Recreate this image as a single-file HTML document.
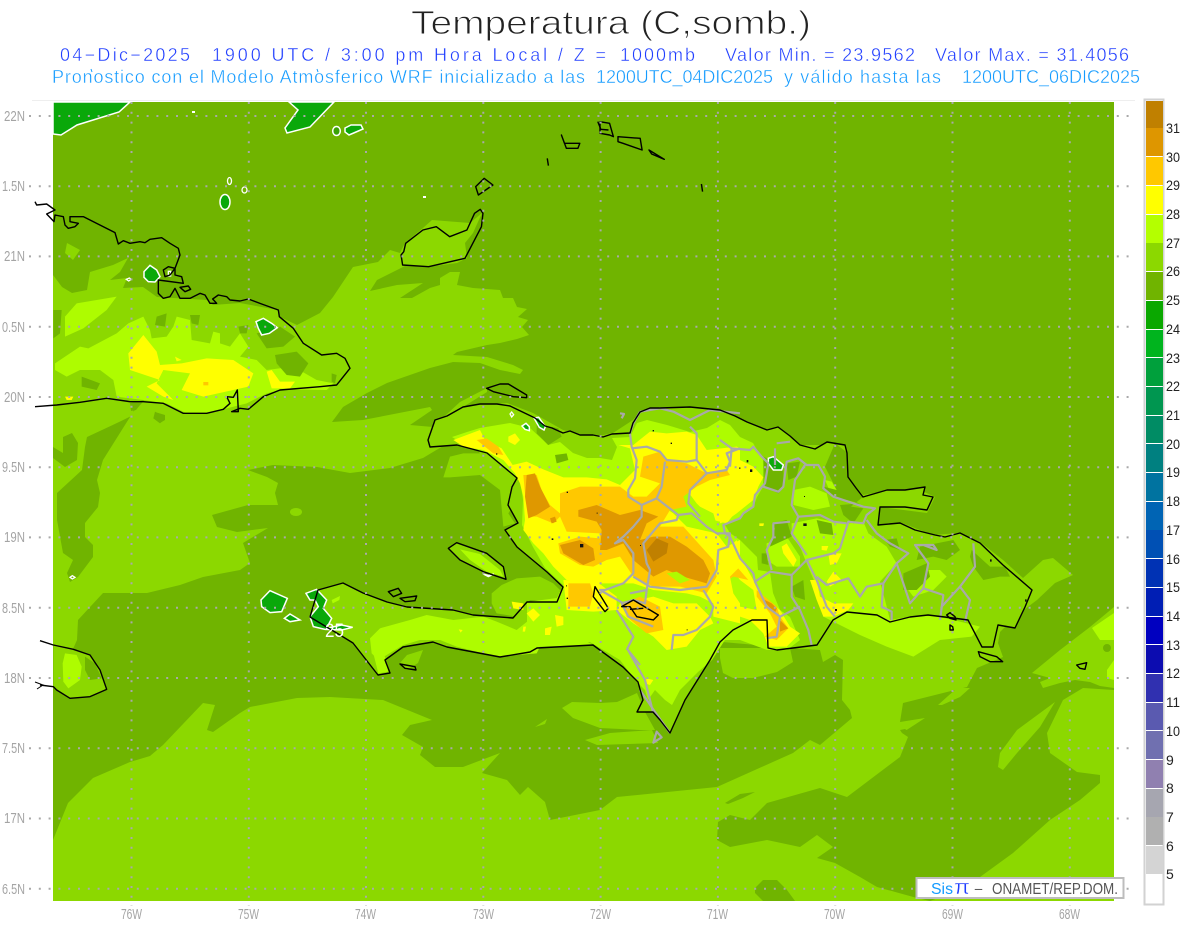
<!DOCTYPE html>
<html lang="es"><head><meta charset="utf-8"><title>Temperatura (C,somb.)</title>
<style>
html,body{margin:0;padding:0;background:#fff;width:1200px;height:927px;overflow:hidden}
svg{display:block}
text{font-family:"Liberation Sans",sans-serif}
.d{fill:#70b400}.a{fill:#8cd800}.b{fill:#aefc00}.y{fill:#ffff00}.o{fill:#ffc800}.p{fill:#df9800}.q{fill:#c08000}
.g{fill:#0aa80a;stroke:#fff;stroke-width:1.5;vector-effect:non-scaling-stroke}
.r{fill:none;stroke:#fff;stroke-width:1.3;vector-effect:non-scaling-stroke}
.c{fill:none;stroke:#000;stroke-width:1.4;vector-effect:non-scaling-stroke;stroke-linejoin:round}
.m{fill:none;stroke:#a9a9a9;stroke-width:2.2;vector-effect:non-scaling-stroke;stroke-linejoin:round}
.t1{fill:#222;stroke:#fff;stroke-width:.95}
.t2{fill:#1f3dff;stroke:#fff;stroke-width:.4}
.t3{fill:#149bff;stroke:#fff;stroke-width:.4}
.ax{fill:#a4a4a4;font-size:14.5px}
.lg{fill:#222;font-size:14px}
</style></head><body>
<svg width="1200" height="927" viewBox="0 0 1200 927" xmlns="http://www.w3.org/2000/svg">
<defs>
<clipPath id="mp"><rect x="53" y="102" width="1061" height="799"/></clipPath>
<path id="hisp" d="M428 440 435 420 447 416 463 407 480 404 497 404 510 406 535 418 545 426 552 428 563 433 570 431 580 435 593 435 603 437 612 434 630 433 633 423 640 412 650 408 660 408 690 407 720 410 735 416 747 422 767 430 778 427 790 436 800 445 815 449 827 442 845 445 847 453 848 477 856 488 863 497 887 490 905 490 925 487 923 495 933 497 927 510 905 507 880 507 878 525 900 523 915 530 935 535 945 537 960 533 980 543 1003 565 1032 590 1025 607 1015 628 998 625 993 647 982 647 968 620 953 618 928 615 910 617 890 622 877 615 847 612 833 620 817 645 777 650 768 648 767 620 752 620 733 630 720 642 710 660 685 700 670 733 660 720 653 712 637 712 643 700 638 682 623 667 593 645 537 648 530 652 500 657 447 647 433 642 403 647 385 660 390 673 378 675 353 643 340 635 310 617 318 590 343 583 363 593 387 602 407 607 453 610 473 615 513 618 527 602 557 602 563 587 547 572 517 547 505 530 518 523 508 505 512 487 517 478 487 453 457 445 430 447Z"/>
</defs>
<rect width="1200" height="927" fill="#fff"/>

<g clip-path="url(#mp)">
<rect x="53" y="102" width="1061" height="799" class="d"/>

<!-- big L1 region -->
<path class="a" d="M53 275 62 287 72 293 87 290 90 272 113 265 128 258 120 272 110 280 127 278 123 288 143 287 157 297 207 300 213 305 240 303 278 310 280 317 297 325 320 313 333 297 353 267 378 262 390 250 400 253 405 243 423 228 432 220 470 223 482 213 473 233 465 243 467 258 457 263 427 267 405 266 377 280 370 291 397 285 423 283 400 298 412 298 430 288 440 285 440 278 450 272 460 272 457 285 473 288 500 290 503 298 513 298 517 307 527 309 518 317 528 320 522 327 529 335 517 339 500 343 487 345 457 352 453 355 487 357 513 365 523 370 520 374 500 370 480 363 453 362 430 368 387 383 367 393 343 407 332 422 363 420 430 407 432 410 410 425 433 427 460 402 487 388 487 392 463 407 507 403 533 413 563 430 593 437 613 433 633 420 640 412 667 408 720 410 747 422 767 430 778 427 800 445 827 445 835 443 847 453 848 477 863 495 890 490 920 490 935 497 927 513 880 507 878 525 902 523 933 535 960 533 980 542 1003 560 1023 578 1043 560 1053 558 1073 575 1055 583 1037 600 1017 615 1000 632 998 643 1003 657 977 668 967 687 903 703 900 722 925 718 902 733 908 737 900 757 847 797 820 788 767 803 750 820 730 815 718 822 717 840 730 847 767 840 800 847 817 835 833 847 817 858 835 863 860 877 877 887 917 898 930 901 53 901Z"/>

<!-- SE L1 -->
<path class="a" d="M1083 688 1114 690 1114 901 930 901 960 890 980 877 1013 853 1050 820 1080 800 1100 783 1100 775 1077 772 1050 753 1047 733 1063 700Z"/>
<path class="a" d="M1032 673 1060 650 1090 627 1114 607 1114 688 1100 686 1090 682 1075 680 1060 683 1043 688 1040 682 1050 678Z"/>
<path class="b" d="M1092 628 1114 613 1114 640 1100 640Z"/>
<path class="b" d="M1107 670 1114 660 1114 680 1107 678Z"/>
<ellipse class="d" cx="1107" cy="648" rx="4" ry="4"/>
<path class="a" d="M998 767 1000 753 1017 730 1055 702 1040 727 1017 753 1003 770Z"/>
<path class="a" d="M938 705 957 688 970 688 960 697 942 705Z"/>
<path class="d" d="M755 888 763 880 777 880 787 890 795 901 763 901 755 893Z"/>
<path class="d" d="M725 803 740 794 755 792 743 798 728 804Z"/>
<path class="d" d="M900 730 905 729 908 731 902 733Z"/>

<!-- dark gulf & south -->
<path class="d" d="M248 470 273 465 317 467 350 473 390 468 423 458 448 443 470 440 500 480 560 560 640 620 700 640 790 648 820 650 823 662 835 655 843 660 842 700 850 710 852 718 820 745 810 740 793 753 717 787 617 797 600 810 550 820 545 802 528 787 520 795 507 780 482 773 500 753 463 767 435 767 420 755 423 747 402 735 410 725 432 720 383 700 330 697 297 698 250 707 240 713 213 732 207 730 215 705 203 703 163 745 150 756 130 762 93 778 68 803 53 840 53 645 73 649 77 640 78 620 90 607 103 593 147 593 180 585 203 577 240 570 250 563 243 543 268 528 237 532 217 527 212 515 248 505 278 505 275 493 278 483 267 477Z"/>
<ellipse class="a" cx="296" cy="512" rx="6" ry="4"/>

<!-- west dark holes -->
<path class="d" d="M130 417 87 437 85 447 82 470 57 493 57 520 63 553 73 560 67 573 70 582 78 577 93 557 93 545 85 537 85 523 98 507 100 493 97 480 103 460Z"/>
<path class="d" d="M53 447 63 453 63 437 72 433 78 443 77 460 65 467 53 458Z"/>
<path class="d" d="M155 412 165 415 165 420 160 423 155 418Z"/>
<path class="d" d="M130 403 144 400 136 410 131 411Z"/>

<!-- L1 patches over dark -->
<path class="a" d="M720 658 723 673 733 678 753 678 777 672 793 662 790 648 720 648Z"/>
<path class="a" d="M562 708 572 702 600 703 617 702 637 693 645 712 655 730 640 730 600 728 573 718Z"/>
<path class="a" d="M585 740 610 733 652 730 658 743 597 745Z"/>
<path class="a" d="M535 727 547 719 545 724Z"/>
<path class="a" d="M400 663 407 655 423 650 418 663 407 670Z"/>
<path class="a" d="M67 243 80 250 73 260 65 253Z"/>
<g transform="translate(420 390) scale(.33333)">
<path class="a" d="M70 262 90 200 130 190 190 190 250 235 270 280 290 330 265 370 285 400 250 410 240 300 180 255 90 262Z"/>
<path class="a" d="M215 610 245 585 290 565 360 560 400 580 420 600 415 635 330 630 290 680 230 670 215 640Z"/>
</g>

<!-- Land base -->
<use href="#hisp" class="a"/>
<g transform="translate(420 390) scale(.33333)"><path class="a" d="M85 475 110 458 200 490 250 530 258 568 190 545 120 510Z"/><path class="b" d="M120 478 180 492 240 540 250 560 200 545 150 510Z"/></g>
<g transform="translate(40 380) scale(.33333)">
<path class="a" d="M40 795 100 808 150 825 180 870 200 928 150 950 90 955 50 930 40 920Z"/>
<path class="b" d="M68 850 75 820 110 825 125 860 120 900 85 925 70 905Z"/>
<path class="d" d="M135 830 165 850 185 895 150 900 135 870Z"/>
</g>

<!-- Cuba detail -->
<g transform="translate(0 200) scale(.33333)">
<path class="b" d="M195 410 195 350 230 310 350 290 320 330 250 385Z"/>
<path class="b" d="M165 490 240 440 265 445 350 400 385 370 430 350 450 390 455 415 500 410 520 380 530 350 570 360 575 420 630 430 640 395 660 400 660 430 690 440 720 400 745 440 720 470 770 480 800 510 880 500 950 540 1000 550 980 570 850 568 800 580 740 610 680 625 620 640 560 640 500 610 430 600 350 590 340 540 300 510 240 510 200 530 165 510Z"/>
<path class="y" d="M385 460 430 405 470 455 480 495 545 490 620 475 700 480 760 520 745 560 610 590 545 570 570 520 490 510 470 550 520 600 490 590 440 560 480 540 390 510Z"/>
<path class="y" d="M525 470 545 480 530 484Z"/>
<path class="y" d="M800 515 815 510 840 545 885 545 870 565 815 565Z"/>
<path class="y" d="M195 590 220 590 215 600 200 600Z"/>
<path class="o" d="M610 546 625 546 625 556 610 556Z"/>
<path class="d" d="M470 350 500 340 495 380 465 375Z"/>
<path class="d" d="M570 345 600 345 595 375 575 370Z"/>
<path class="d" d="M715 380 745 375 740 400 720 400Z"/>
<path class="d" d="M825 465 890 455 905 470 925 490 900 530 860 525 830 490Z"/>
<path class="d" d="M160 330 185 330 180 400 160 415Z"/>
<path class="d" d="M245 530 300 550 290 570 245 560Z"/>
<path class="d" d="M995 520 1010 525 1005 550 995 545Z"/>
<path class="d" d="M770 400 840 380 885 410 850 440 800 445Z"/>
<path class="d" d="M400 620 430 605 400 635Z"/>
<path class="d" d="M465 635 495 655 480 670 460 655Z"/>
<path class="d" d="M260 715 390 650 345 720Z"/>
<path class="d" d="M190 715 215 700 225 720Z"/>
<path class="d" d="M1000 660 1080 600 1080 660Z"/>
</g>

<!-- Hispaniola L2 -->
<path class="b" d="M452 437 467 432 480 428 510 423 530 428 543 440 548 445 560 442 573 453 587 458 600 458 612 460 617 447 612 438 630 437 637 423 647 420 667 425 690 432 707 428 720 420 730 425 740 437 753 443 763 460 763 487 757 497 753 508 740 517 725 525 730 533 740 540 757 557 758 570 770 572 773 593 780 610 790 617 800 640 787 650 767 650 740 640 725 640 712 660 698 672 680 690 672 705 665 700 655 690 648 700 645 690 635 680 620 660 590 642 560 645 535 646 527 625 527 602 557 598 563 585 545 568 533 547 522 525 523 500 520 480 490 455 470 448Z"/>
<g transform="translate(240 560) scale(.33333)">
<path class="b" d="M390 235 420 205 510 180 560 165 640 180 730 170 770 185 830 210 880 170 940 200 1010 230 1060 255 900 260 890 280 770 290 650 260 600 240 540 240 490 255 440 285 415 300 395 280Z"/>
<path class="b" d="M400 280 435 290 445 335 415 340Z"/>
<path class="b" d="M275 120 300 108 298 120 278 130Z"/>
<path class="y" d="M860 160 880 145 900 165 880 185Z"/>
<path class="y" d="M945 165 970 170 970 195 950 200Z"/>
<path class="y" d="M915 205 935 200 930 225 915 225Z"/>
<path class="y" d="M850 200 858 200 855 215 848 215Z"/>
<path class="y" d="M656 208 668 210 662 218Z"/>
<path class="y" d="M1220 355 1240 360 1230 375 1215 370Z"/>
<path class="y" d="M815 125 850 130 850 150 820 145Z"/>
</g>
<g transform="translate(720 390) scale(.33333)">
<path class="b" d="M215 400 290 385 340 395 385 400 430 395 445 430 500 470 530 520 480 575 495 630 510 690 570 680 625 675 700 690 780 710 755 740 660 750 580 800 500 770 420 735 350 700 310 680 300 640 290 590 260 520 240 470 215 440Z"/>
<path class="b" d="M220 300 270 290 320 310 330 350 280 360 220 345Z"/>
<path class="b" d="M550 580 610 540 660 540 680 560 640 600 580 620Z"/>
<path class="b" d="M140 460 200 440 240 500 240 530 170 530 140 510Z"/>
<path class="b" d="M315 270 335 275 350 300 330 305Z"/>
<path class="d" d="M130 200 190 230 190 290 175 310 135 290Z"/>
<path class="d" d="M200 220 240 215 230 260 205 270Z"/>
<path class="d" d="M155 400 200 390 215 440 150 470 165 415Z"/>
<path class="d" d="M345 160 385 190 390 260 430 320 380 360 360 345 420 340 340 320 310 290 350 300 315 230Z"/>
<path class="d" d="M360 345 430 355 400 400 370 375Z"/>
<path class="d" d="M495 450 530 445 540 480 510 470Z"/>
<path class="d" d="M290 390 335 400 340 435 300 430Z"/>
<path class="d" d="M755 480 810 530 855 530 870 560 840 560 790 570 760 530 750 500Z"/>
<path class="d" d="M600 470 700 450 720 480 680 510 640 500 590 510Z"/>
<path class="d" d="M550 550 620 520 630 560 590 600 550 600Z"/>
<path class="d" d="M215 590 250 570 255 630 225 620Z"/>
<path class="d" d="M125 490 140 490 145 525 125 520Z"/>
<path class="y" d="M0 190 15 190 60 210 100 230 130 262 115 290 100 330 50 370 15 395 0 400Z"/>
<path class="y" d="M0 500 50 450 60 500 100 570 130 620 180 660 210 710 240 730 200 770 145 770 130 730 90 690 60 680 60 650 110 660 100 600 60 570 30 530 0 530Z"/>
<path class="o" d="M0 540 45 470 50 530 85 570 40 560 10 580 0 590Z"/>
<path class="o" d="M110 600 170 650 180 680 205 715 170 750 135 740 170 710 150 670 110 620Z"/>
<path class="p" d="M155 640 170 655 165 670 125 625Z"/>
<path class="p" d="M180 690 205 715 180 725Z"/>
<path class="y" d="M185 470 200 460 230 510 220 530 190 490Z"/>
<path class="y" d="M270 570 290 570 300 620 340 640 400 640 385 660 340 680 310 680 290 630Z"/>
<path class="y" d="M325 490 365 490 350 520 330 525Z"/>
<path class="y" d="M340 545 365 570 330 590 320 575Z"/>
<path class="y" d="M305 468 325 468 320 482 305 480Z"/>
<path class="y" d="M118 400 132 400 130 408 118 408Z"/>
<path class="o" d="M0 255 30 250 15 290 0 300Z"/>
</g>
<g transform="translate(420 390) scale(.33333)">
<path class="y" d="M100 150 180 120 195 150 245 175 278 225 320 215 370 238 430 262 500 262 560 268 600 285 625 260 645 240 630 175 595 165 640 165 690 125 740 130 800 125 830 135 860 180 950 170 960 175 960 350 920 400 880 390 830 340 800 300 740 300 720 320 680 320 760 370 800 410 890 430 920 470 960 450 960 530 930 560 940 610 960 640 960 700 880 680 880 640 840 620 800 610 700 600 640 580 590 580 500 580 440 570 400 530 370 490 340 460 310 420 315 390 310 320 300 280 285 250 250 210 190 180 130 170Z"/>
<path class="y" d="M600 640 700 620 760 640 830 640 870 680 880 700 840 720 800 770 740 780 700 740 640 700 590 660Z"/>
<path class="y" d="M430 570 530 575 590 620 590 660 520 665 440 660Z"/>
<path class="y" d="M265 140 285 130 300 150 285 165 265 155Z"/>
<path class="b" d="M450 400 480 400 480 420 455 420Z"/>
<path class="b" d="M820 340 880 370 895 420 850 415 810 370Z"/>
<path class="o" d="M170 150 200 145 235 170 250 195 220 190Z"/>
<path class="o" d="M310 255 350 255 365 300 390 345 420 370 420 310 480 290 540 290 600 290 640 320 680 320 720 280 660 260 670 200 720 185 740 210 800 220 860 250 920 240 930 255 870 270 830 290 790 320 800 350 750 360 720 410 790 410 880 510 890 560 860 610 780 590 700 590 640 560 600 500 560 510 520 530 480 525 420 490 415 460 480 440 540 445 540 430 440 425 420 380 400 400 350 380 325 380 315 310Z"/>
<path class="o" d="M445 580 510 580 520 610 510 650 445 650Z"/>
<path class="o" d="M610 640 660 620 720 650 730 720 680 730 620 680Z"/>
<path class="p" d="M320 255 345 250 360 290 390 350 350 375 325 385 315 320Z"/>
<path class="p" d="M475 360 530 345 600 375 660 360 715 380 680 400 660 450 700 440 750 440 800 470 850 510 870 550 860 580 790 560 740 540 700 560 640 510 610 460 560 480 540 480 545 420 530 395 475 380Z"/>
<path class="p" d="M420 465 480 450 520 475 525 510 490 525 430 490Z"/>
<path class="p" d="M390 385 405 380 410 395 395 400Z"/>
<path class="q" d="M680 480 710 445 745 460 740 490 700 515Z"/>
<path class="d" d="M350 100 415 115 425 140 385 165 350 130Z"/>
<path class="d" d="M405 195 440 190 445 210 410 220Z"/>
<path class="b" d="M740 550 770 545 810 570 780 580Z"/>
</g>

<!-- green blobs -->
<path class="g" d="M53 102 130 102 119 112 77 125 61 135 53 134Z"/>
<path class="g" d="M289 102 298 110 285 128 287 133 310 127 334 102Z"/>
<ellipse class="g" cx="336.500" cy="131" rx="3.800" ry="4.500" style="fill:#3aa206"/>
<path class="g" d="M345 128 351 125 361 125 363 129 356 132 349 135 345 132Z"/>
<ellipse class="g" cx="225" cy="202" rx="5" ry="7.500"/>
<ellipse class="r" cx="229.500" cy="181" rx="2" ry="3.500"/>
<ellipse class="r" cx="244.500" cy="190" rx="2.500" ry="3"/>
<g transform="translate(0 200) scale(.33333)">
<path class="g" d="M432 215 450 196 470 210 480 230 465 246 445 245 432 232Z"/>
<path class="r" d="M379 238 388 234 394 238 386 243Z"/>
<path class="r" d="M505 214 512 214 512 228 505 228Z"/>
<path class="g" d="M768 365 790 355 815 370 832 383 808 400 785 405 775 385Z"/>
</g>
<g transform="translate(40 380) scale(.33333)">
<path class="g" d="M663 660 690 632 742 655 725 695 690 698 665 680Z"/>
<path class="g" d="M733 715 750 702 780 720 750 725Z"/>
<path class="g" d="M798 640 830 628 860 660 850 685 875 715 860 745 905 735 938 742 905 750 855 748 820 740 810 710 835 680 825 660 810 660Z"/>
<path class="r" d="M90 592 97 587 105 592 97 597Z"/>
</g>
<g transform="translate(420 390) scale(.33333)">
<path class="r" d="M270 72 275 66 281 74 275 81Z"/>
<path class="g" d="M306 108 318 100 328 110 328 122 315 118Z"/>
<path class="g" d="M342 84 356 82 376 110 372 120 358 112Z"/>
<path class="r" d="M190 552 205 556 222 552 205 560Z"/>
</g>
<g transform="translate(720 390) scale(.33333)">
<path class="g" d="M145 205 160 200 190 225 185 240 160 240 145 220Z"/>
</g>
<path d="M192 111h3v2h-3zM423 196h3v2h-3z" fill="#fff"/>
</g>

<!-- borders gray -->
<g transform="translate(420 390) scale(.33333)">
<path class="m" d="M660 65 640 100 630 130 635 170 650 210 645 265 625 300 625 320 665 345 665 380 640 410 610 440 585 460 610 450 640 490 640 550 610 580 555 600 540 600 610 640"/>
<path class="m" d="M635 175 680 170 720 185 740 210 800 215 830 210 830 130 810 110"/>
<path class="m" d="M830 210 860 250 920 240 930 215 920 190 960 175"/>
<path class="m" d="M735 215 725 290 710 325 665 345"/>
<path class="m" d="M710 325 775 375 815 370 860 410 890 430 930 430 925 470 895 480 890 540 860 590 780 600 690 590 640 560"/>
<path class="m" d="M860 250 810 300 805 340 840 380"/>
<path class="m" d="M775 375 770 390 720 400 670 460 680 520 690 540 680 600 630 610"/>
<path class="m" d="M850 600 880 650 870 680 830 720 790 735 760 735 755 780"/>
<path class="m" d="M680 600 675 640 640 630 605 640 625 680 700 710"/>
<path class="m" d="M590 660 640 740 620 780"/>
<path class="m" d="M660 65 720 55 760 65 810 90 870 60 960 70"/>
<path class="m" d="M600 70 612 72 605 85"/>
</g>
<g transform="translate(720 390) scale(.33333)">
<path class="m" d="M0 150 35 175 90 180 100 170 125 200 145 220"/>
<path class="m" d="M35 175 30 230"/>
<path class="m" d="M145 220 135 280 105 315 100 350 70 370 60 385 10 405 15 430 30 440 60 505 100 550 105 575 150 545 215 555 260 510 340 490 360 475 385 395 430 400 440 375 465 355 430 350 340 320 310 295 315 260 295 225 260 225 235 205 200 215 190 290 175 305 130 290"/>
<path class="m" d="M165 175 165 225"/>
<path class="m" d="M170 160 210 155"/>
<path class="m" d="M255 225 225 270 215 345 235 380 300 375 340 395 380 400"/>
<path class="m" d="M235 380 215 430 260 495"/>
<path class="m" d="M210 395 160 400 160 440 140 480 155 540"/>
<path class="m" d="M260 510 290 570 320 650 345 680"/>
<path class="m" d="M215 555 215 620 240 660 265 720 275 765"/>
<path class="m" d="M105 575 140 650 180 680 170 740 140 745"/>
<path class="m" d="M180 680 240 650"/>
<path class="m" d="M290 560 320 585 385 565 420 620 440 590 490 580 530 520 565 490 510 460 470 430 440 390"/>
<path class="m" d="M490 580 485 650 515 665 515 690"/>
<path class="m" d="M530 520 570 640 610 595 625 520 585 465 640 465 650 480 610 465"/>
<path class="m" d="M610 595 670 615 660 690"/>
<path class="m" d="M665 650 720 590 765 530 760 460"/>
<path class="m" d="M720 590 750 630 735 695"/>
</g>
<path class="m" d="M640 665 628 650 645 680 653 712M640 690 655 712 670 733"/>
<g transform="translate(500 650) scale(.33333)"><path class="m" d="M470 245 485 262 460 278Z"/></g>

<!-- coastlines -->
<use href="#hisp" class="c"/>
<g transform="translate(0 200) scale(.33333)">
<path class="c" d="M105 5 110 15 140 12 165 30 140 42 162 65 165 45 190 50 195 75 205 85 225 80 235 70 210 65 210 50 250 50 290 70 345 98 355 132 370 122 390 130 420 125 435 128 450 118 485 113 510 130 535 145 540 165 525 205 510 225 495 230 490 210 505 200 525 205 525 225 545 230 550 250 475 240 475 280 490 295 510 290 525 265 540 295 570 295 600 280 615 285 630 310 650 310 638 297 655 285 680 290 690 300 720 303 745 297 785 312 835 330 838 350 880 385 910 430 965 465 1010 460 1035 475 1050 505 1010 555 960 560 840 570 790 590 745 628 720 625 695 635 715 635 712 570 700 592 680 590 690 610 670 628 620 640 550 640 490 610 430 605 390 605 320 595 240 607 170 615 105 620"/>
<path class="c" d="M540 262 565 258 572 268 555 275Z"/>
</g>
<g transform="translate(40 380) scale(.33333)">
<path class="c" d="M0 782 40 795 100 808 150 825 180 870 200 928 150 950 90 955 50 930 40 920 0 915"/>
</g>
<g transform="scale(.3827 .33333)">
<path class="c" d="M1255 628 1240 640 1220 690 1175 710 1140 680 1105 690 1060 730 1055 755 1048 765 1052 795 1120 800 1215 775 1258 680 1262 640Z"/>
<path class="c" d="M1265 535 1288 555 1250 585 1243 560Z"/>
<path class="c" d="M1467 405 1475 430 1515 430 1510 445 1480 445Z"/>
<path class="c" d="M1430 475 1433 497"/>
<path class="c" d="M1562 365 1570 388 1590 390"/>
</g>
<g transform="translate(600 0) scale(.3827 .33333)">
<path class="c" d="M0 365 25 370 35 410 25 405 0 400Z"/>
<path class="c" d="M47 410 105 415 110 450 60 430 47 425Z"/>
<path class="c" d="M128 450 168 478 135 462Z"/>
<path class="c" d="M265 552 268 575"/>
</g>
<g transform="translate(420 390) scale(.33333)">
<path class="c" d="M85 475 110 458 200 490 250 530 258 568 190 545 120 510Z"/>
<path class="c" d="M525 590 565 655 555 665 520 620Z"/>
<path class="c" d="M605 650 640 630 715 675 700 690 650 680 630 650Z"/>
<path class="c" d="M630 658 670 655"/>
<path d="M480 462h10v10h-10zM228 190h4v4h-4zM395 445h5v5h-5zM530 368h3v3h-3zM440 305h4v4h-4zM660 465h3v3h-3zM698 120h4v4h-4zM752 158h4v4h-4zM438 586h3v3h-3zM440 623h4v4h-4zM800 718h3v3h-3z" fill="#111"/>
</g>
<g transform="translate(300 220) scale(.33333)">
<path class="c" d="M560 505 600 492 625 492 680 525 680 533 640 530 580 515Z"/>
</g>
<g transform="translate(240 560) scale(.33333)">
<path class="c" d="M445 95 475 85 485 100 460 110Z"/>
<path class="c" d="M480 115 530 108 525 122 495 125Z"/>
<path class="c" d="M480 312 525 320 528 330 495 325Z"/>
</g>
<g transform="translate(720 390) scale(.33333)">
<path class="c" d="M775 785 830 800 848 815 810 815 780 800Z"/>
<path class="c" d="M680 675 690 668 705 680 708 690 690 685Z"/>
<path class="c" d="M690 705 698 710 700 720 690 720Z"/>
<path d="M250 400h10v8h-10zM345 657h6v6h-6zM915 628h5v7h-5zM810 508h5v7h-5zM80 210h5v7h-5zM58 232h3v5h-3zM90 238h7v8h-7zM252 318h3v3h-3z" fill="#111"/>
</g>
<g transform="translate(900 500) scale(.33333)">
<path class="c" d="M530 495 560 488 555 508 540 505Z"/>
</g>
<path d="M35 682 43 685 37 689" fill="none" stroke="#000" stroke-width="1"/>

<!-- grid -->
<g fill="none" stroke="#a9a9a9" stroke-width="2" stroke-dasharray="2 7.800">
<path d="M29 116H1136M29 186.300H1136M29 256.400H1136M29 326.700H1136M29 397H1136M29 467.200H1136M29 537.400H1136M29 607.800H1136M29 678H1136M29 748.200H1136M29 818.500H1136M29 888.800H1136"/>
<path d="M131.500 102V906M248.800 102V906M366 102V906M483.300 102V906M600.600 102V906M717.900 102V906M835.200 102V906M952.500 102V906M1069.800 102V906"/>
</g>
<path d="M32 100.500H1135" stroke="#eee" stroke-width="1"/>

<!-- contour label -->
<text x="325" y="637" font-size="19" fill="#fff" textLength="19" lengthAdjust="spacingAndGlyphs">25</text>

<!-- Titles -->
<text class="t1" x="411" y="34" font-size="33" textLength="400" lengthAdjust="spacingAndGlyphs">Temperatura (C,somb.)</text>
<g font-size="18">
<text class="t2" x="60" y="61" textLength="130" lengthAdjust="spacing">04−Dic−2025</text>
<text class="t2" x="212" y="61" textLength="394" lengthAdjust="spacing">1900 UTC / 3:00 pm Hora Local / Z =</text>
<text class="t2" x="620" y="61" textLength="75" lengthAdjust="spacing">1000mb</text>
<text class="t2" x="725" y="61" textLength="190" lengthAdjust="spacing">Valor Min. = 23.9562</text>
<text class="t2" x="935" y="61" textLength="194" lengthAdjust="spacing">Valor Max. = 31.4056</text>
<text class="t3" x="52" y="83" textLength="533" lengthAdjust="spacing">Pronostico con el Modelo Atmosferico WRF inicializado a las</text>
<text class="t3" x="596" y="83" textLength="177" lengthAdjust="spacing">1200UTC_04DIC2025</text>
<text class="t3" x="784" y="83" textLength="157" lengthAdjust="spacing">y válido hasta las</text>
<text class="t3" x="962" y="83" textLength="178" lengthAdjust="spacing">1200UTC_06DIC2025</text>
</g>
<path d="M91 69 92 72M317 69 318 72" stroke="#149bff" stroke-width="1" fill="none"/>

<!-- axis labels -->
<g class="ax">
<text x="4" y="121" textLength="21" lengthAdjust="spacingAndGlyphs">22N</text>
<text x="2" y="191" textLength="23" lengthAdjust="spacingAndGlyphs">1.5N</text>
<text x="4" y="261" textLength="21" lengthAdjust="spacingAndGlyphs">21N</text>
<text x="2" y="332" textLength="23" lengthAdjust="spacingAndGlyphs">0.5N</text>
<text x="4" y="402" textLength="21" lengthAdjust="spacingAndGlyphs">20N</text>
<text x="2" y="472" textLength="23" lengthAdjust="spacingAndGlyphs">9.5N</text>
<text x="4" y="542" textLength="21" lengthAdjust="spacingAndGlyphs">19N</text>
<text x="2" y="613" textLength="23" lengthAdjust="spacingAndGlyphs">8.5N</text>
<text x="4" y="683" textLength="21" lengthAdjust="spacingAndGlyphs">18N</text>
<text x="2" y="753" textLength="23" lengthAdjust="spacingAndGlyphs">7.5N</text>
<text x="4" y="823" textLength="21" lengthAdjust="spacingAndGlyphs">17N</text>
<text x="2" y="894" textLength="23" lengthAdjust="spacingAndGlyphs">6.5N</text>
<text x="121" y="919" textLength="21" lengthAdjust="spacingAndGlyphs">76W</text>
<text x="238" y="919" textLength="21" lengthAdjust="spacingAndGlyphs">75W</text>
<text x="355" y="919" textLength="21" lengthAdjust="spacingAndGlyphs">74W</text>
<text x="473" y="919" textLength="21" lengthAdjust="spacingAndGlyphs">73W</text>
<text x="590" y="919" textLength="21" lengthAdjust="spacingAndGlyphs">72W</text>
<text x="707" y="919" textLength="21" lengthAdjust="spacingAndGlyphs">71W</text>
<text x="824" y="919" textLength="21" lengthAdjust="spacingAndGlyphs">70W</text>
<text x="942" y="919" textLength="21" lengthAdjust="spacingAndGlyphs">69W</text>
<text x="1059" y="919" textLength="21" lengthAdjust="spacingAndGlyphs">68W</text>
</g>

<!-- Colour bar -->
<rect x="1144.500" y="99.500" width="19" height="805" fill="#fff" stroke="#d2d2d2" stroke-width="2"/>
<g>
<rect x="1146" y="101" width="17" height="27" fill="#c08000"/>
<rect x="1146" y="128" width="17" height="28" fill="#de9600"/>
<rect x="1146" y="157" width="17" height="28" fill="#ffc800"/>
<rect x="1146" y="186" width="17" height="28" fill="#ffff00"/>
<rect x="1146" y="215" width="17" height="28" fill="#b4ff00"/>
<rect x="1146" y="243" width="17" height="28" fill="#8cd800"/>
<rect x="1146" y="272" width="17" height="28" fill="#70b400"/>
<rect x="1146" y="301" width="17" height="28" fill="#0aa800"/>
<rect x="1146" y="330" width="17" height="27" fill="#00b41e"/>
<rect x="1146" y="358" width="17" height="28" fill="#00a03c"/>
<rect x="1146" y="387" width="17" height="28" fill="#009650"/>
<rect x="1146" y="416" width="17" height="27" fill="#008c64"/>
<rect x="1146" y="444" width="17" height="28" fill="#008080"/>
<rect x="1146" y="473" width="17" height="28" fill="#0073a0"/>
<rect x="1146" y="502" width="17" height="28" fill="#0064b4"/>
<rect x="1146" y="530" width="17" height="28" fill="#0050b4"/>
<rect x="1146" y="559" width="17" height="28" fill="#0032b4"/>
<rect x="1146" y="588" width="17" height="28" fill="#001eb4"/>
<rect x="1146" y="617" width="17" height="27" fill="#0000c0"/>
<rect x="1146" y="645" width="17" height="28" fill="#0c0cb0"/>
<rect x="1146" y="674" width="17" height="28" fill="#3030b0"/>
<rect x="1146" y="703" width="17" height="27" fill="#5a5ab0"/>
<rect x="1146" y="731" width="17" height="28" fill="#7070b0"/>
<rect x="1146" y="760" width="17" height="28" fill="#9080b0"/>
<rect x="1146" y="789" width="17" height="28" fill="#a6a6b0"/>
<rect x="1146" y="817" width="17" height="28" fill="#b0b0b0"/>
<rect x="1146" y="846" width="17" height="28" fill="#d4d4d4"/>
</g>
<g class="lg">
<text x="1166" y="133" textLength="14" lengthAdjust="spacingAndGlyphs">31</text>
<text x="1166" y="162" textLength="14" lengthAdjust="spacingAndGlyphs">30</text>
<text x="1166" y="190" textLength="14" lengthAdjust="spacingAndGlyphs">29</text>
<text x="1166" y="219" textLength="14" lengthAdjust="spacingAndGlyphs">28</text>
<text x="1166" y="248" textLength="14" lengthAdjust="spacingAndGlyphs">27</text>
<text x="1166" y="276" textLength="14" lengthAdjust="spacingAndGlyphs">26</text>
<text x="1166" y="305" textLength="14" lengthAdjust="spacingAndGlyphs">25</text>
<text x="1166" y="334" textLength="14" lengthAdjust="spacingAndGlyphs">24</text>
<text x="1166" y="363" textLength="14" lengthAdjust="spacingAndGlyphs">23</text>
<text x="1166" y="391" textLength="14" lengthAdjust="spacingAndGlyphs">22</text>
<text x="1166" y="420" textLength="14" lengthAdjust="spacingAndGlyphs">21</text>
<text x="1166" y="449" textLength="14" lengthAdjust="spacingAndGlyphs">20</text>
<text x="1166" y="477" textLength="14" lengthAdjust="spacingAndGlyphs">19</text>
<text x="1166" y="506" textLength="14" lengthAdjust="spacingAndGlyphs">18</text>
<text x="1166" y="535" textLength="14" lengthAdjust="spacingAndGlyphs">17</text>
<text x="1166" y="564" textLength="14" lengthAdjust="spacingAndGlyphs">16</text>
<text x="1166" y="592" textLength="14" lengthAdjust="spacingAndGlyphs">15</text>
<text x="1166" y="621" textLength="14" lengthAdjust="spacingAndGlyphs">14</text>
<text x="1166" y="650" textLength="14" lengthAdjust="spacingAndGlyphs">13</text>
<text x="1166" y="678" textLength="14" lengthAdjust="spacingAndGlyphs">12</text>
<text x="1166" y="707" textLength="14" lengthAdjust="spacingAndGlyphs">11</text>
<text x="1166" y="736" textLength="14" lengthAdjust="spacingAndGlyphs">10</text>
<text x="1166" y="765">9</text>
<text x="1166" y="793">8</text>
<text x="1166" y="822">7</text>
<text x="1166" y="851">6</text>
<text x="1166" y="879">5</text>
</g>

<!-- credit box -->
<rect x="916.500" y="878" width="207" height="20" fill="#fff" stroke="#bdbdbd" stroke-width="2"/>
<text x="931" y="894" font-size="15.500" fill="#149bff" textLength="22" lengthAdjust="spacingAndGlyphs">Sis</text>
<text x="954" y="894" font-size="20" fill="#1f3dff" textLength="16" lengthAdjust="spacingAndGlyphs" stroke="#fff" stroke-width=".4">π</text>
<text x="974" y="894" font-size="14" fill="#555" textLength="9" lengthAdjust="spacingAndGlyphs">−</text>
<text x="992" y="894" font-size="15.500" fill="#555" textLength="126" lengthAdjust="spacingAndGlyphs">ONAMET/REP.DOM.</text>
</svg>
</body></html>
